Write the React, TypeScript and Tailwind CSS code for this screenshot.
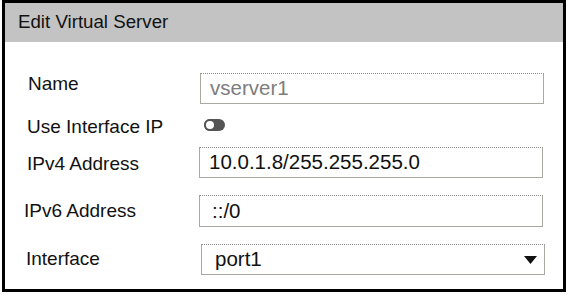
import React from "react";

function Field({
  className,
  text,
  muted,
  children,
}: {
  className: string;
  text: string;
  muted?: boolean;
  children?: React.ReactNode;
}) {
  return (
    <div
      className={`flex items-center border border-[#a9a9a2] [border-top-style:dotted] [border-top-color:#8a8a8a] text-[20.5px] ${
        muted ? "text-[#7d7d7d]" : "text-[#111]"
      } ${className}`}
    >
      <span className="flex-1">{text}</span>
      {children}
    </div>
  );
}

function Toggle() {
  return (
    <div className="relative ml-[4px] h-[12px] w-[21px] rounded-full bg-[#555]">
      <div className="absolute left-0 top-0 h-[12px] w-[12px] rounded-full border-[2px] border-[#555] bg-white" />
    </div>
  );
}

export default function App() {
  return (
    <div className="h-[298px] w-[569px] bg-white pl-[2px] font-['Liberation_Sans',Arial,sans-serif] text-[#111]">
      <div className="flex h-[292px] w-[564px] flex-col border-[3px] border-black">
        <div className="flex h-[39px] shrink-0 items-center bg-[#c3c3c3] pl-[13px] text-[18.7px]">
          Edit Virtual Server
        </div>

        <div className="flex flex-col pt-[31px] text-[19px]">
          <div className="flex h-[31px] items-center">
            <div className="mb-[9px] w-[195px] pl-[23px]">Name</div>
            <Field className="h-[31px] w-[344px] pl-[9px]" text="vserver1" muted />
          </div>

          <div className="mt-[15px] flex h-[12px] items-center">
            <div className="mt-[2px] w-[195px] pl-[22px] leading-none">Use Interface IP</div>
            <Toggle />
          </div>

          <div className="mt-[16px] flex h-[31px] items-center">
            <div className="mt-[4px] w-[194px] pl-[22px]">IPv4 Address</div>
            <Field className="h-[31px] w-[344px] pl-[9px]" text="10.0.1.8/255.255.255.0" />
          </div>

          <div className="mt-[17px] flex h-[32px] items-center">
            <div className="w-[194px] pl-[19px]">IPv6 Address</div>
            <Field className="h-[32px] w-[344px] pl-[12px]" text="::/0" />
          </div>

          <div className="mt-[17px] flex h-[31px] items-center">
            <div className="w-[196px] pl-[21px]">Interface</div>
            <Field className="h-[31px] w-[344px] pl-[13px] pr-[7px]" text="port1">
              <svg width="13" height="8" viewBox="0 0 13 8" className="mt-[1px]">
                <path d="M0 0 H13 L6.5 8 Z" fill="#111" />
              </svg>
            </Field>
          </div>
        </div>
      </div>
    </div>
  );
}
